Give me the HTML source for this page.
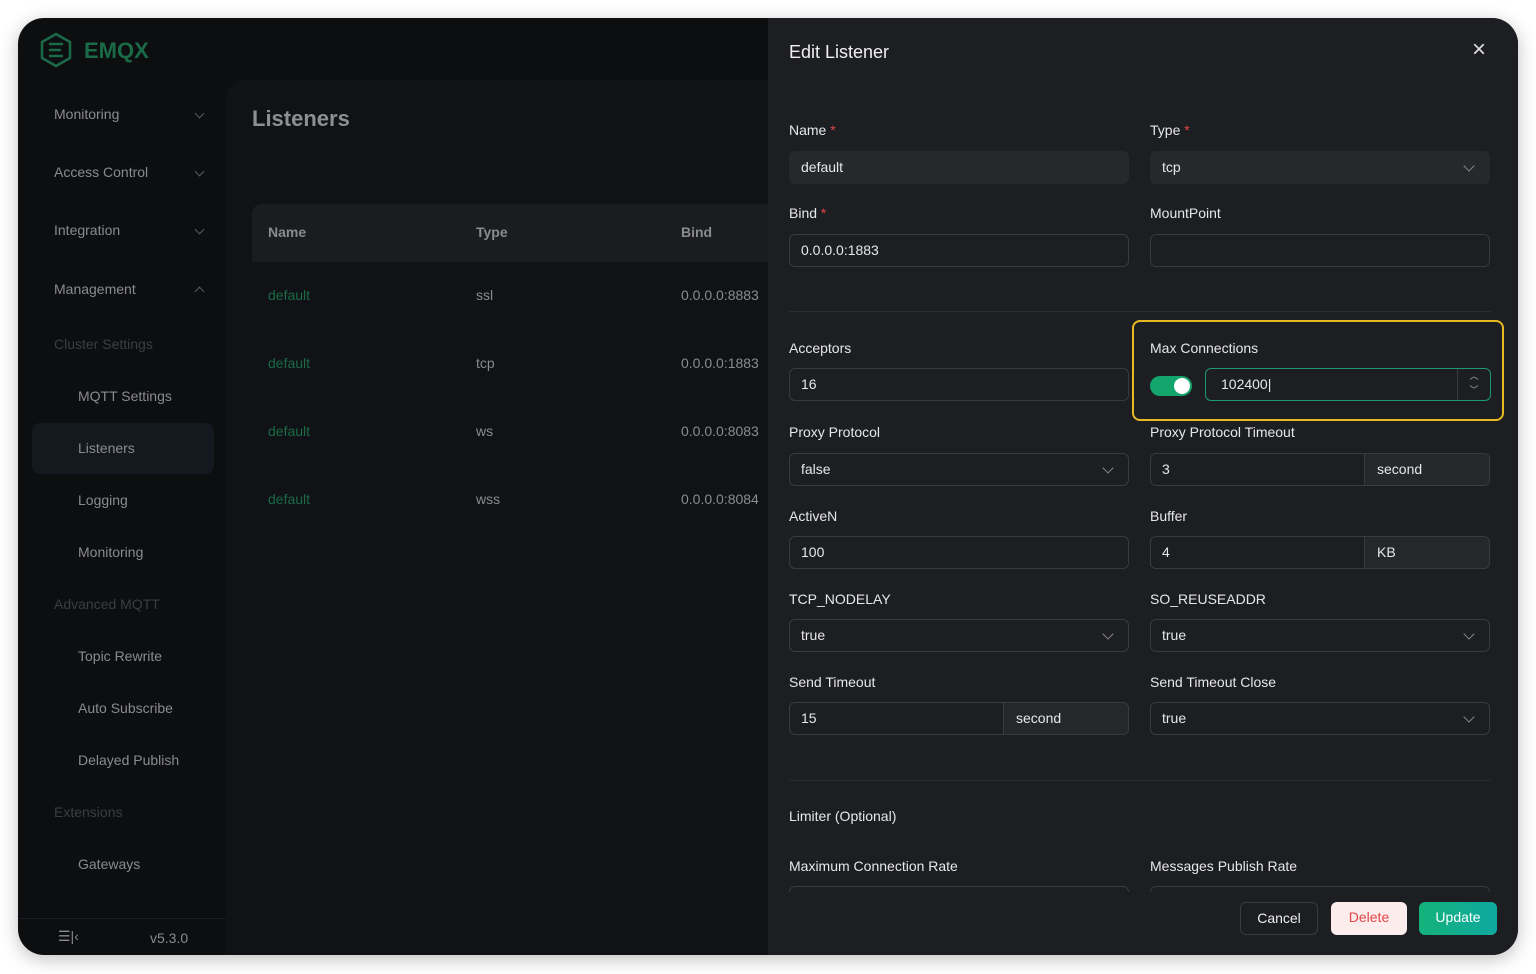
<!DOCTYPE html>
<html><head><meta charset="utf-8"><style>
*{box-sizing:border-box;margin:0;padding:0}
body{width:1536px;height:974px;background:#fff;font-family:"Liberation Sans",sans-serif;position:relative;overflow:hidden}
.win{position:absolute;left:18px;top:18px;width:1500px;height:937px;border-radius:26px;background:#0d0e10;overflow:hidden;box-shadow:0 4px 18px rgba(0,0,0,.25)}
.a{position:absolute;white-space:nowrap}
.side{color:#8a8b8e;font-size:14px}
.sub{color:#3b3d40;font-size:14px}
.chev{position:absolute;width:7px;height:7px;border-right:1px solid #5a5b5e;border-bottom:1px solid #5a5b5e;transform:rotate(45deg)}
.chevu{transform:rotate(-135deg)}
.main{position:absolute;left:208px;top:62px;width:600px;height:900px;background:#111215;border-radius:18px 0 0 0}
.td{color:#8a8b8e;font-size:14px}
.drawer{position:absolute;left:750px;top:0;width:750px;height:937px;background:#1d1e21}
.lbl{position:absolute;color:#e6e7e9;font-size:14px}
.lbl i{color:#e0474a;font-style:normal}
.in{position:absolute;width:340px;height:33px;border:1px solid #393b40;border-radius:6px;color:#e6e7e9;font-size:14px;line-height:31px;padding-left:11px}
.dis{background:#26282c;border-color:#26282c}
.sel::after{content:"";position:absolute;right:16px;top:10px;width:7px;height:7px;border-right:1px solid #888;border-bottom:1px solid #888;transform:rotate(45deg)}
.unit{position:absolute;right:0;top:0;bottom:0;width:125px;background:#25272b;border-left:1px solid #393b40;padding-left:12px;border-radius:0 6px 6px 0}
.btn{position:absolute;top:884px;height:33px;border-radius:6px;font-size:14px;line-height:31px;text-align:center}
</style></head><body>
<div class="win">
 <svg class="a" style="left:20px;top:14px" width="36" height="36" viewBox="0 0 36 36"><path d="M18 2 L32 10 L32 26 L18 34 L4 26 L4 10 Z" fill="none" stroke="#1a6a48" stroke-width="2.5" stroke-linejoin="round"/><path d="M12 12h12M12 18h10M12 24h12" stroke="#1a6a48" stroke-width="2.5" stroke-linecap="round"/></svg>
 <div class="a" style="left:66px;top:20px;color:#1a6a48;font-size:22px;font-weight:bold">EMQX</div>
 <div class="a side" style="left:36px;top:88px">Monitoring</div><div class="chev" style="left:178px;top:92px"></div>
 <div class="a side" style="left:36px;top:146px">Access Control</div><div class="chev" style="left:178px;top:150px"></div>
 <div class="a side" style="left:36px;top:204px">Integration</div><div class="chev" style="left:178px;top:208px"></div>
 <div class="a side" style="left:36px;top:263px">Management</div><div class="chev chevu" style="left:178px;top:270px"></div>
 <div class="a sub" style="left:36px;top:318px">Cluster Settings</div>
 <div class="a side" style="left:60px;top:370px">MQTT Settings</div>
 <div class="a" style="left:14px;top:405px;width:182px;height:51px;background:#141920;border-radius:8px"></div>
 <div class="a side" style="left:60px;top:422px">Listeners</div>
 <div class="a side" style="left:60px;top:474px">Logging</div>
 <div class="a side" style="left:60px;top:526px">Monitoring</div>
 <div class="a sub" style="left:36px;top:578px">Advanced MQTT</div>
 <div class="a side" style="left:60px;top:630px">Topic Rewrite</div>
 <div class="a side" style="left:60px;top:682px">Auto Subscribe</div>
 <div class="a side" style="left:60px;top:734px">Delayed Publish</div>
 <div class="a sub" style="left:36px;top:786px">Extensions</div>
 <div class="a side" style="left:60px;top:838px">Gateways</div>
 <div class="a" style="left:0;top:900px;width:208px;height:1px;background:#1c1d20"></div>
 <div class="a side" style="left:40px;top:910px;font-size:14px">☰|‹</div>
 <div class="a side" style="left:132px;top:912px">v5.3.0</div>
 <div class="main">
  <div class="a" style="left:26px;top:26px;color:#8e8f92;font-size:22px;font-weight:bold">Listeners</div>
  <div class="a" style="left:26px;top:124px;width:580px;height:58px;background:#1b1c1f;border-radius:10px 0 0 0"></div>
  <div class="a td" style="left:42px;top:144px;font-weight:bold">Name</div>
  <div class="a td" style="left:250px;top:144px;font-weight:bold">Type</div>
  <div class="a td" style="left:455px;top:144px;font-weight:bold">Bind</div>
  <div class="a td" style="left:42px;top:207px;color:#1a6a48">default</div><div class="a td" style="left:250px;top:207px">ssl</div><div class="a td" style="left:455px;top:207px">0.0.0.0:8883</div>
  <div class="a td" style="left:42px;top:275px;color:#1a6a48">default</div><div class="a td" style="left:250px;top:275px">tcp</div><div class="a td" style="left:455px;top:275px">0.0.0.0:1883</div>
  <div class="a td" style="left:42px;top:343px;color:#1a6a48">default</div><div class="a td" style="left:250px;top:343px">ws</div><div class="a td" style="left:455px;top:343px">0.0.0.0:8083</div>
  <div class="a td" style="left:42px;top:411px;color:#1a6a48">default</div><div class="a td" style="left:250px;top:411px">wss</div><div class="a td" style="left:455px;top:411px">0.0.0.0:8084</div>
 </div>
 <div class="drawer">
  <div class="a" style="left:21px;top:24px;color:#f0f0f2;font-size:18px">Edit Listener</div>
  <div class="a" style="left:704px;top:18px;color:#ddd;font-size:24px">×</div>
  <div class="lbl" style="left:21px;top:104px">Name <i>*</i></div>
  <div class="lbl" style="left:382px;top:104px">Type <i>*</i></div>
  <div class="in dis" style="left:21px;top:133px">default</div>
  <div class="in dis sel" style="left:382px;top:133px">tcp</div>
  <div class="lbl" style="left:21px;top:187px">Bind <i>*</i></div>
  <div class="lbl" style="left:382px;top:187px">MountPoint</div>
  <div class="in" style="left:21px;top:216px">0.0.0.0:1883</div>
  <div class="in" style="left:382px;top:216px"></div>
  <div class="a" style="left:21px;top:293px;width:702px;height:1px;background:#2c2e32"></div>
  <div class="lbl" style="left:21px;top:322px">Acceptors</div>
  <div class="in" style="left:21px;top:350px">16</div>
  <div class="a" style="left:364px;top:302px;width:372px;height:101px;border:2px solid #e8b923;border-radius:8px"></div>
  <div class="lbl" style="left:382px;top:322px">Max Connections</div>
  <div class="a" style="left:382px;top:358px;width:42px;height:20px;background:#14a56c;border-radius:10px"><div class="a" style="left:24px;top:2px;width:16px;height:16px;background:#fff;border-radius:50%"></div></div>
  <div class="in" style="left:437px;top:350px;width:286px;border-color:#1d9a6c;padding-left:15px">102400|<div class="a" style="right:0;top:0;width:33px;height:31px;border-left:1px solid #393b40;color:#aaa;font-size:9px;line-height:14px;text-align:center">︿<br>﹀</div></div>
  <div class="lbl" style="left:21px;top:406px">Proxy Protocol</div>
  <div class="lbl" style="left:382px;top:406px">Proxy Protocol Timeout</div>
  <div class="in sel" style="left:21px;top:435px">false</div>
  <div class="in" style="left:382px;top:435px">3<div class="unit">second</div></div>
  <div class="lbl" style="left:21px;top:490px">ActiveN</div>
  <div class="lbl" style="left:382px;top:490px">Buffer</div>
  <div class="in" style="left:21px;top:518px">100</div>
  <div class="in" style="left:382px;top:518px">4<div class="unit">KB</div></div>
  <div class="lbl" style="left:21px;top:573px">TCP_NODELAY</div>
  <div class="lbl" style="left:382px;top:573px">SO_REUSEADDR</div>
  <div class="in sel" style="left:21px;top:601px">true</div>
  <div class="in sel" style="left:382px;top:601px">true</div>
  <div class="lbl" style="left:21px;top:656px">Send Timeout</div>
  <div class="lbl" style="left:382px;top:656px">Send Timeout Close</div>
  <div class="in" style="left:21px;top:684px">15<div class="unit">second</div></div>
  <div class="in sel" style="left:382px;top:684px">true</div>
  <div class="a" style="left:21px;top:762px;width:702px;height:1px;background:#2c2e32"></div>
  <div class="lbl" style="left:21px;top:790px">Limiter (Optional)</div>
  <div class="lbl" style="left:21px;top:840px">Maximum Connection Rate</div>
  <div class="lbl" style="left:382px;top:840px">Messages Publish Rate</div>
  <div class="a" style="left:21px;top:868px;width:340px;height:6px;border:1px solid #393b40;border-bottom:none;border-radius:6px 6px 0 0"></div>
  <div class="a" style="left:382px;top:868px;width:340px;height:6px;border:1px solid #393b40;border-bottom:none;border-radius:6px 6px 0 0"></div>
  <div class="btn" style="left:472px;width:78px;border:1px solid #3a3c40;color:#eee">Cancel</div>
  <div class="btn" style="left:563px;width:76px;background:#fdecec;color:#e0474a">Delete</div>
  <div class="btn" style="left:651px;width:78px;background:linear-gradient(90deg,#14b27a,#0fa9a0);color:#fff">Update</div>
 </div>
</div>
</body></html>
